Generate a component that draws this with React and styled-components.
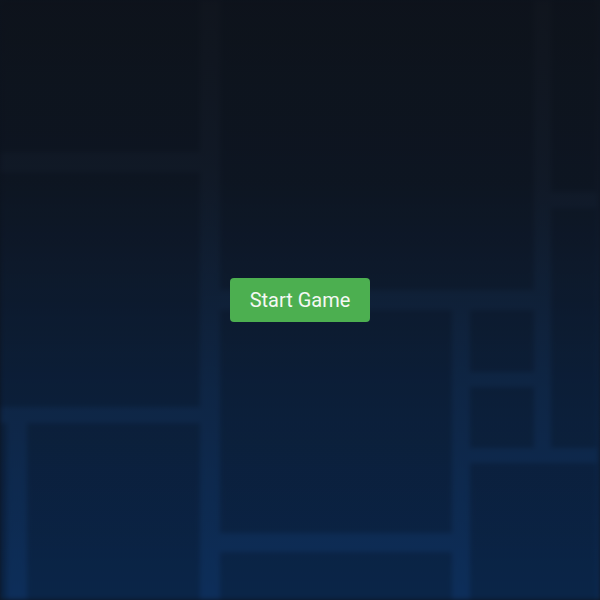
import React from "react";
import styled, { createGlobalStyle } from "styled-components";

const GlobalStyle = createGlobalStyle`
  html, body {
    margin: 0;
    padding: 0;
    background: #0e1520;
  }
  #root {
    height: 100vh;
  }
`;

const Screen = styled.div`
  position: relative;
  width: 600px;
  height: 600px;
  overflow: hidden;
  background: #0e1520;
`;

const Board = styled.div`
  display: grid;
  grid-template-columns: 7px 20px 173px 20px 232px 18px 64px 17px 46px 3px;
  grid-template-rows: 152px 20px 20px 16px 82px 20px 62px 15px 20px 16px 25px 15px 70px 19px 48px;
  width: 600px;
  height: 600px;
  background: linear-gradient(180deg, #111720 0%, #111b2a 30%, #0e2748 65%, #0d2e5a 100%);
  filter: blur(2.5px);
`;

const Tile = styled.div`
  grid-column: ${props => props.col};
  grid-row: ${props => props.row};
  background: rgba(4, 8, 16, 0.24);
`;

const Overlay = styled.div`
  position: absolute;
  inset: 0;
  display: flex;
  align-items: center;
  justify-content: center;
  background: linear-gradient(180deg, rgba(14, 18, 26, 0.4) 0%, rgba(14, 18, 26, 0.12) 45%, rgba(14, 18, 26, 0) 100%);
`;

const StartButton = styled.button`
  width: 140px;
  height: 44px;
  padding: 0;
  border: none;
  border-radius: 4px;
  background: #4caf50;
  color: #f4f8f4;
  font-family: Roboto, "Noto Sans", sans-serif;
  font-size: 20px;
  cursor: pointer;
`;

const tiles = [
  { col: "1 / 4", row: "1 / 2" },
  { col: "1 / 4", row: "3 / 10" },
  { col: "1 / 2", row: "11 / 16" },
  { col: "3 / 4", row: "11 / 16" },
  { col: "5 / 8", row: "1 / 6" },
  { col: "9 / 10", row: "1 / 4" },
  { col: "9 / 10", row: "5 / 12" },
  { col: "5 / 6", row: "7 / 14" },
  { col: "7 / 8", row: "7 / 8" },
  { col: "7 / 8", row: "9 / 12" },
  { col: "7 / 10", row: "13 / 16" },
  { col: "5 / 6", row: "15 / 16" }
];

const App = () =>
  <>
    <GlobalStyle />
    <Screen>
      <Board>
        {tiles.map((t, i) => <Tile key={i} col={t.col} row={t.row} />)}
      </Board>
      <Overlay>
        <StartButton>Start Game</StartButton>
      </Overlay>
    </Screen>
  </>;

export default App;
